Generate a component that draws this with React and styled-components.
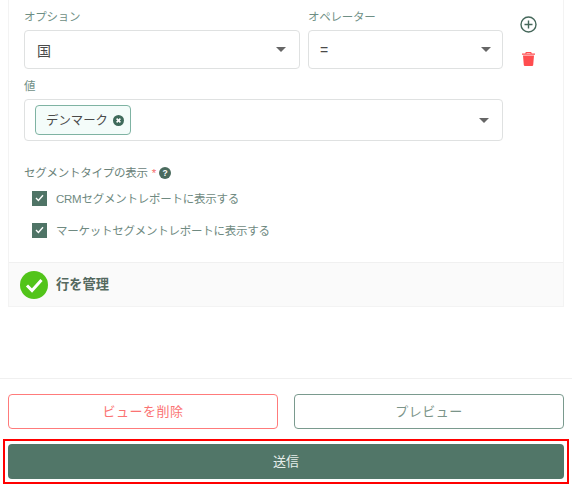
import React from "react";
import styled, { createGlobalStyle } from "styled-components";

const Global = createGlobalStyle`
  html, body { margin: 0; padding: 0; background: #fff; }
  body { font-family: "Liberation Sans", "Noto Sans CJK JP", sans-serif; }
`;
const Page = styled.div`
  width: 572px; height: 489px; box-sizing: border-box; padding: 0 8px; display: flex; flex-direction: column; overflow: hidden;
`;
const Panel = styled.section`
  height: 307px; box-sizing: border-box; border: 1px solid #f3f3f3; border-top: none; display: flex; flex-direction: column;
`;
const Form = styled.div`
  height: 262px; box-sizing: border-box; padding: 8px 0 0 15px; display: flex;
`;
const Fields = styled.div`
  width: 480px; display: flex; flex-direction: column;
`;
const Row = styled.div`
  display: flex; gap: 8px;
`;
const Field = styled.div`
  width: ${p => p.$w}px; display: flex; flex-direction: column;
`;
const ValueField = styled(Field)`
  margin-top: 8px;
`;
const Label = styled.label`
  font-size: 11.5px; letter-spacing: -0.25px; line-height: 18px; height: 22px; color: #6f8f85;
`;
const Select = styled.div`
  height: ${p => p.$h}px; box-sizing: border-box; border: 1px solid #dfe1e1; border-radius: 4px; display: flex; align-items: center; justify-content: space-between; padding: 0 ${p => p.$pr}px 0 ${p => p.$pl}px; color: #4a4a4a; font-size: 14px; background: #fff;
`;
const Caret = styled.span`
  width: 0; height: 0; border-left: 5px solid transparent; border-right: 5px solid transparent; border-top: 5px solid #666;
`;
const Tag = styled.span`
  height: 30px; width: 96px; box-sizing: border-box; border: 1px solid #7fb3a3; border-radius: 4px; background: #f4fcfa; display: flex; align-items: center; gap: 5px; padding-left: 10px; font-size: 12.4px; color: #4a4a4a; white-space: nowrap;
`;
const Actions = styled.div`
  margin-left: 15px; width: 18px; padding-top: 8px; display: flex; flex-direction: column; align-items: center; gap: 19px;
`;
const SegmentTitle = styled.div`
  margin-top: 24px; height: 16px; font-size: 11.5px; line-height: 16px; letter-spacing: -0.25px; color: #6a8279; display: flex; align-items: center;
`;
const Star = styled.span`
  color: #f56c6c; margin: 0 3px 0 4px;
`;
const Checks = styled.div`
  margin-top: 9px; padding-left: 8px; display: flex; flex-direction: column; gap: 16px;
`;
const CheckRow = styled.div`
  height: 16px; display: flex; align-items: center; gap: 9px; font-size: 11.5px; letter-spacing: -0.25px; color: #6f8a81; white-space: nowrap;
`;
const Box = styled.span`
  width: 15px; height: 15px; background: #4f7466; display: flex; align-items: center; justify-content: center;
`;
const ManageBar = styled.div`
  height: 44px; background: #fafafa; border-top: 1px solid #f0f0f0; display: flex; align-items: center; gap: 8px; padding-left: 11px; font-size: 13.25px; font-weight: 700; line-height: 16px; box-sizing: border-box; color: #54695f;
`;
const Footer = styled.footer`
  margin: 71px -8px 0; border-top: 1px solid #f0f0f0; padding: 15px 8px 0; display: flex; flex-direction: column; gap: 10px;
`;
const ButtonRow = styled.div`
  display: flex; gap: 16px;
`;
const OutlineButton = styled.button`
  flex: 1; height: 35px; box-sizing: border-box; background: #fff; border: 1px solid ${p => p.$c}; border-radius: 4px; color: ${p => p.$t}; font: inherit; font-size: 13px; letter-spacing: 0.5px; padding: 0 0 2px;
`;
const Highlight = styled.div`
  margin: 0 -5px; padding: 3px; border: 2px solid #ff0000;
`;
const SubmitButton = styled.button`
  display: block; height: 35px; box-sizing: border-box; background: #517668; border: none; border-radius: 4px; color: #e6eeeb; font: inherit; font-size: 13px; width: 100%; padding: 0 0 2px;
`;

const Plus = () => (
  <svg width="17" height="17" viewBox="0 0 17 17" fill="none" stroke="#46685b" strokeWidth="1.4">
    <circle cx="8.5" cy="8.5" r="7.5" /><path d="M8.5 4.5v8M4.5 8.5h8" />
  </svg>
);
const Trash = () => (
  <svg width="13" height="14" viewBox="0 0 13 14">
    <path fill="#ff4d4f" d="M1 3.5h11l-.8 9.4a1.2 1.2 0 0 1-1.2 1.1H3a1.2 1.2 0 0 1-1.2-1.1z" />
    <path fill="#ff4d4f" d="M0 1.6h3.4V1a1 1 0 0 1 1-1h4.2a1 1 0 0 1 1 1v.6H13v1.2H0zM4.5 1.6h4V.9h-4z" />
  </svg>
);
const TagClose = () => (
  <svg width="11" height="11" viewBox="0 0 11 11">
    <circle cx="5.5" cy="5.5" r="5.5" fill="#3f6a5b" /><path d="M3.6 3.6l3.8 3.8M7.4 3.6l-3.8 3.8" stroke="#fff" strokeWidth="1.5" />
  </svg>
);
const Help = () => (
  <svg width="12" height="12" viewBox="0 0 12 12">
    <circle cx="6" cy="6" r="6" fill="#4a6b5e" />
    <text x="6" y="9" textAnchor="middle" fontSize="8.5" fontWeight="700" fill="#fff" fontFamily="Liberation Sans">?</text>
  </svg>
);
const Tick = () => (
  <svg width="9" height="8" viewBox="0 0 9 8" fill="none" stroke="#fff" strokeWidth="1.4"><path d="M1 4l2.4 2.4L8 1.2" /></svg>
);
const BigCheck = () => (
  <svg width="28" height="28" viewBox="0 0 28 28" fill="none">
    <circle cx="14" cy="14" r="14" fill="#52c41a" /><path d="M7 14.5l5 5L21.5 9" stroke="#fff" strokeWidth="3" />
  </svg>
);

export default function App() {
  return (
    <Page>
      <Global />
      <Panel>
        <Form>
          <Fields>
            <Row>
              <Field $w={276}>
                <Label>オプション</Label>
                <Select $h={39} $pl={12} $pr={13}><span>国</span><Caret /></Select>
              </Field>
              <Field $w={195}>
                <Label>オペレーター</Label>
                <Select $h={39} $pl={11} $pr={11}><span>=</span><Caret /></Select>
              </Field>
            </Row>
            <ValueField $w={479}>
              <Label>値</Label>
              <Select $h={42} $pl={10} $pr={13}>
                <Tag>デンマーク<TagClose /></Tag><Caret />
              </Select>
            </ValueField>
            <SegmentTitle>セグメントタイプの表示<Star>*</Star><Help /></SegmentTitle>
            <Checks>
              <CheckRow><Box><Tick /></Box>CRMセグメントレポートに表示する</CheckRow>
              <CheckRow><Box><Tick /></Box>マーケットセグメントレポートに表示する</CheckRow>
            </Checks>
          </Fields>
          <Actions><Plus /><Trash /></Actions>
        </Form>
        <ManageBar><BigCheck />行を管理</ManageBar>
      </Panel>
      <Footer>
        <ButtonRow>
          <OutlineButton $c="#ff7b7b" $t="#fb7373">ビューを削除</OutlineButton>
          <OutlineButton $c="#7a9a8e" $t="#7b9489">プレビュー</OutlineButton>
        </ButtonRow>
        <Highlight><SubmitButton>送信</SubmitButton></Highlight>
      </Footer>
    </Page>
  );
}
